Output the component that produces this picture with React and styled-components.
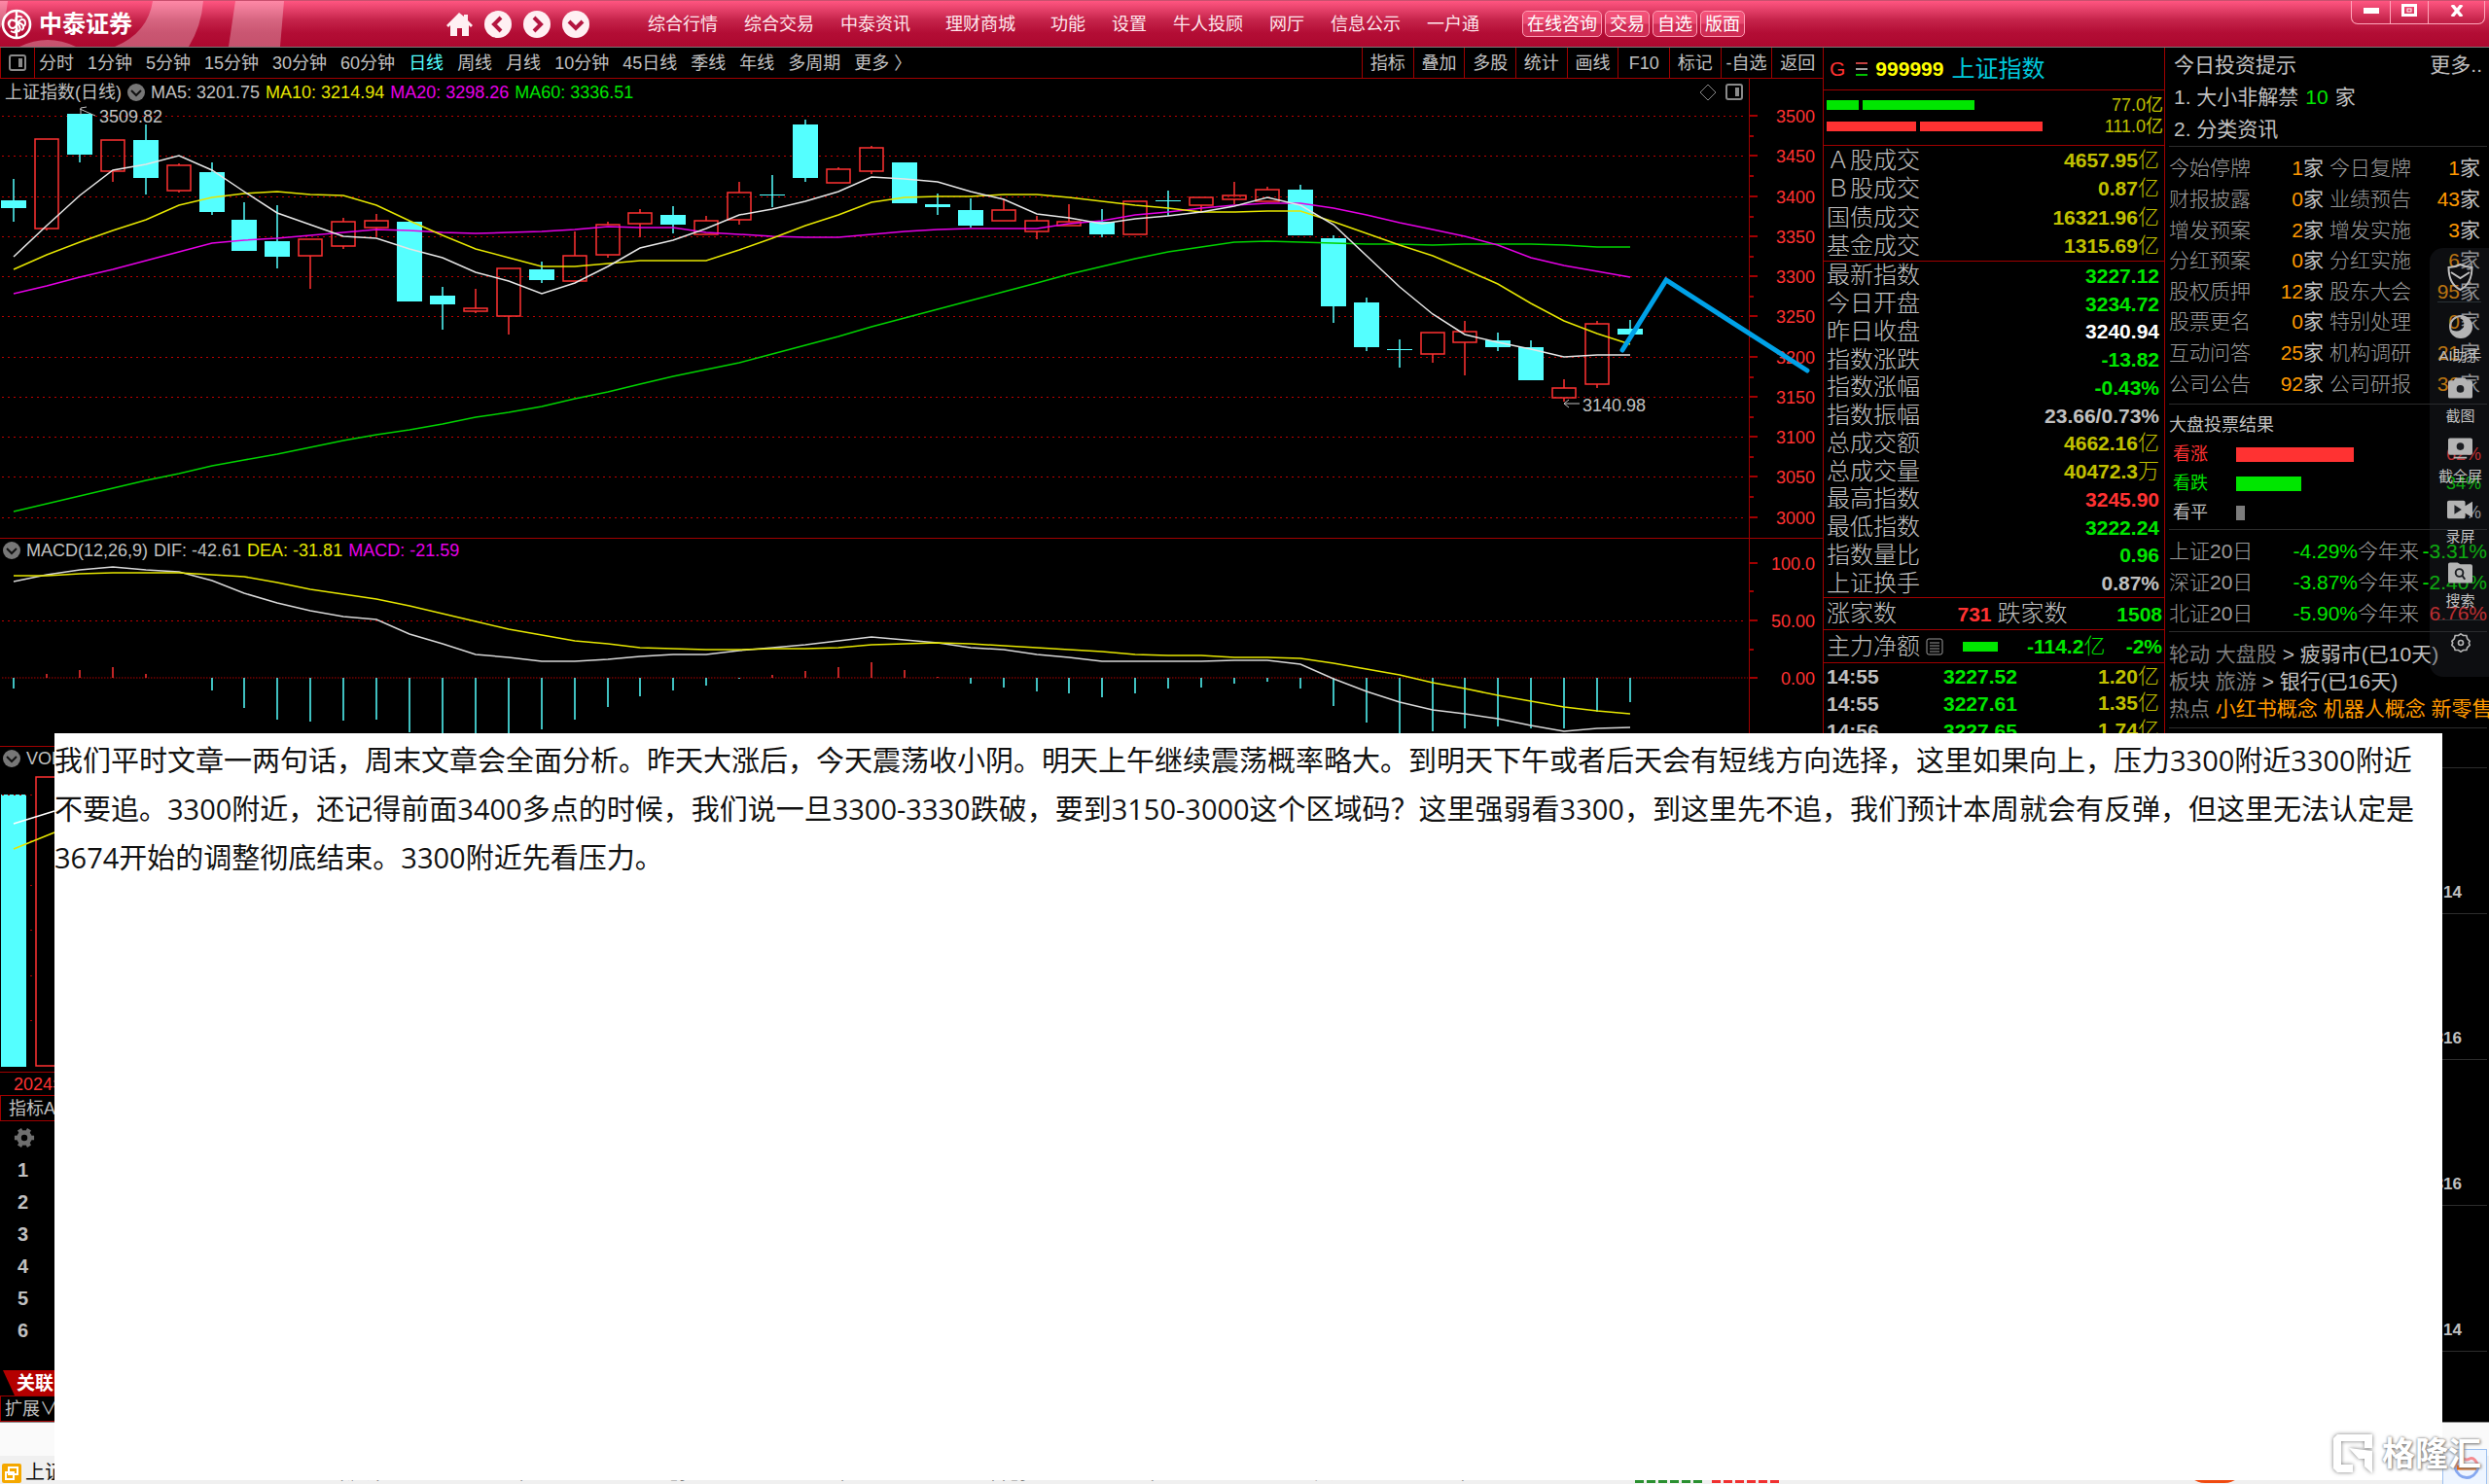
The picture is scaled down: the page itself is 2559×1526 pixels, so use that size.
import React from 'react';
import styled, { createGlobalStyle } from 'styled-components';

const GlobalStyle = createGlobalStyle`
  * {
    box-sizing: border-box;
  }

  body {
    margin: 0;
    background: #000;
    color: #c0c0c0;
    font: 18px/1 "Liberation Sans", "Noto Sans CJK SC", sans-serif;
  }

  button {
    margin: 0;
    padding: 0;
    border: 0;
    background: none;
    color: inherit;
    font: inherit;
    cursor: pointer;
  }

  svg {
    display: block;
  }
`;

/* ---------- data ---------- */

const STEP = 33.92;
const cx = (i) => Math.round(14 + i * STEP);

// [up, body top, body bottom, high, low]
const CANDLES = [
  [0, 206, 214, 184, 228], [1, 143, 235, 143, 237], [0, 117, 159, 117, 167], [1, 144, 176, 144, 187],
  [0, 144, 183, 128, 200], [1, 170, 196, 168, 198], [0, 177, 218, 167, 221], [0, 226, 258, 208, 258],
  [0, 248, 264, 211, 276], [1, 246, 263, 246, 297], [1, 228, 253, 224, 256], [1, 227, 234, 220, 243],
  [0, 228, 310, 227, 310], [0, 304, 313, 295, 339], [1, 317, 320, 297, 322], [1, 276, 325, 276, 344],
  [0, 277, 288, 269, 291], [1, 263, 289, 238, 289], [1, 231, 262, 228, 265], [1, 219, 230, 215, 244],
  [0, 221, 231, 212, 240], [1, 227, 241, 222, 241], [1, 198, 226, 187, 231], [0, 200, 201, 180, 213],
  [0, 128, 183, 123, 187], [1, 174, 188, 172, 188], [1, 152, 176, 150, 179], [0, 167, 209, 167, 209],
  [0, 210, 213, 199, 221], [0, 216, 232, 204, 234], [1, 216, 227, 205, 227], [1, 227, 238, 222, 246],
  [1, 228, 232, 210, 232], [0, 228, 241, 215, 244], [1, 207, 241, 207, 241], [0, 206, 207, 196, 222],
  [1, 203, 211, 203, 218], [1, 201, 205, 187, 210], [1, 195, 207, 192, 207], [0, 195, 242, 190, 242],
  [0, 245, 315, 242, 332], [0, 311, 357, 306, 361], [0, 359, 360, 349, 378], [1, 342, 364, 342, 373],
  [1, 341, 352, 330, 386], [0, 350, 357, 342, 361], [0, 357, 391, 350, 391], [1, 399, 409, 390, 413],
  [1, 333, 395, 330, 399], [0, 338, 344, 329, 344],
];

const MA5 = [264, 232, 201, 175, 169, 160, 175, 197, 219, 231, 243, 245, 256, 265, 280, 289, 302, 291, 274, 255, 247, 235, 221, 215, 207, 197, 182, 184, 187, 197, 205, 220, 224, 230, 225, 222, 218, 212, 203, 211, 231, 263, 295, 323, 344, 352, 359, 367, 365, 365];
const MA10 = [277, 262, 249, 237, 226, 211, 203, 199, 197, 200, 201, 211, 227, 242, 256, 265, 274, 274, 271, 268, 268, 268, 257, 245, 232, 221, 208, 203, 202, 202, 200, 200, 203, 207, 211, 214, 218, 218, 217, 217, 228, 240, 252, 263, 277, 292, 312, 330, 343, 354];
const MA20 = [302, 294, 285, 277, 268, 259, 250, 247, 245, 242, 239, 236, 237, 239, 240, 239, 238, 236, 233, 234, 234, 239, 241, 243, 244, 244, 241, 238, 236, 235, 235, 235, 230, 227, 221, 218, 214, 211, 209, 209, 214, 221, 229, 236, 243, 252, 265, 273, 279, 285];
const MA60 = [526, 518, 510, 502, 494, 487, 479, 473, 467, 460, 453, 447, 442, 436, 429, 424, 418, 410, 403, 395, 387, 380, 373, 364, 355, 346, 336, 327, 318, 309, 300, 291, 282, 274, 266, 259, 254, 249, 248, 249, 250, 251, 251, 252, 251, 251, 251, 252, 254, 254];

const DIF = [598, 591, 586, 583, 586, 588, 597, 610, 620, 628, 634, 637, 652, 662, 673, 676, 680, 680, 678, 675, 673, 673, 669, 666, 663, 659, 655, 658, 661, 666, 668, 673, 676, 680, 680, 680, 680, 679, 679, 683, 698, 711, 722, 730, 734, 739, 746, 752, 749, 748];
const DEA = [592, 592, 590, 589, 589, 589, 591, 593, 599, 606, 611, 616, 623, 631, 639, 647, 653, 659, 662, 666, 667, 668, 668, 667, 667, 666, 663, 662, 661, 662, 664, 666, 668, 670, 673, 674, 674, 676, 676, 677, 682, 688, 694, 702, 708, 715, 721, 727, 731, 734];
const HIST = [708, 693, 689, 686, 693, 697, 710, 728, 740, 742, 741, 740, 753, 756, 760, 758, 750, 740, 727, 716, 710, 705, 698, 694, 690, 686, 681, 689, 696, 703, 707, 711, 713, 717, 713, 708, 707, 703, 701, 708, 726, 743, 755, 752, 749, 747, 749, 749, 732, 722];

const PRICES = ['3500', '3450', '3400', '3350', '3300', '3250', '3200', '3150', '3100', '3050', '3000'];
const priceY = (i) => Math.round(119 + i * 41.25);

const MENU = [
  ['综合行情', '综合交易', '中泰资讯'],
  ['理财商城'],
  ['功能', '设置', '牛人投顾', '网厅', '信息公示', '一户通'],
];
const PERIODS = ['分时', '1分钟', '5分钟', '15分钟', '30分钟', '60分钟', '日线', '周线', '月线', '10分钟', '45日线', '季线', '年线', '多周期'];
const TOOLS = ['指标', '叠加', '多股', '统计', '画线', 'F10', '标记', '-自选', '返回'];

const TURNOVER = [
  ['Ａ股成交', '4657.95', 'gold', '亿'],
  ['Ｂ股成交', '0.87', 'gold', '亿'],
  ['国债成交', '16321.96', 'gold', '亿'],
  ['基金成交', '1315.69', 'gold', '亿'],
];
const QUOTES = [
  ['最新指数', '3227.12', 'green'],
  ['今日开盘', '3234.72', 'green'],
  ['昨日收盘', '3240.94', 'white'],
  ['指数涨跌', '-13.82', 'green'],
  ['指数涨幅', '-0.43%', 'green'],
  ['指数振幅', '23.66/0.73%', 'grey'],
  ['总成交额', '4662.16', 'gold', '亿'],
  ['总成交量', '40472.3', 'gold', '万'],
  ['最高指数', '3245.90', 'red'],
  ['最低指数', '3222.24', 'green'],
  ['指数量比', '0.96', 'green'],
  ['上证换手', '0.87%', 'grey'],
];
const TICKS = [
  ['14:55', '3227.52', '1.20'],
  ['14:55', '3227.61', '1.35'],
  ['14:56', '3227.65', '1.74'],
];
const NOTICES = [
  ['今始停牌', 1, '今日复牌', 1],
  ['财报披露', 0, '业绩预告', 43],
  ['增发预案', 2, '增发实施', 3],
  ['分红预案', 0, '分红实施', 6],
  ['股权质押', 12, '股东大会', 95],
  ['股票更名', 0, '特别处理', 0],
  ['互动问答', 25, '机构调研', 21],
  ['公司公告', 92, '公司研报', 36],
];
const VOTES = [
  ['看涨', 62, 121, 'red', 'red'],
  ['看跌', 34, 67, 'green', 'green'],
  ['看平', 4, 9, 'dim', 'grey'],
];
const RETURNS = [
  ['上证20日', '-4.29%', '-3.31%', 'green'],
  ['深证20日', '-3.87%', '-2.40%', 'green'],
  ['北证20日', '-5.90%', '6.76%', 'red'],
];

const COLORS = {
  red: '#ff3232',
  green: '#00e600',
  gold: '#c0c000',
  grey: '#c0c0c0',
  dim: '#7c7c7c',
  white: '#ffffff',
  orange: '#ff9900',
  cyan: '#54ffff',
  magenta: '#e600e6',
  yellow: '#e6e600',
};
const RULE = '#a00000';

/* ---------- frame ---------- */

const Page = styled.div`
  position: relative;
  display: flex;
  flex-direction: column;
  min-height: 100vh;
  overflow: hidden;
`;

const TitleBar = styled.header`
  position: relative;
  display: flex;
  align-items: center;
  height: 49px;
  border-top: 1px solid #c8506e;
  border-bottom: 1px solid #777;
  background: linear-gradient(180deg, #ff5580 0%, #e33f68 20%, #c5234a 42%, #b30d35 70%, #ad082f 100%);
  color: #ffe6ec;
`;

const Arcs = styled.svg`
  position: absolute;
  left: 0;
  top: 0;
`;

const Brand = styled.div`
  position: relative;
  display: flex;
  align-items: center;
  gap: 7px;
  width: 458px;
  padding-left: 1px;
  color: #fff;
  font-size: 24px;
  font-weight: 700;
`;

const NavIcons = styled.div`
  display: flex;
  align-items: center;
  gap: 12px;
  width: 208px;
`;

const Menu = styled.nav`
  display: flex;
  gap: 36px;
`;

const MenuGroup = styled.div`
  display: flex;
  gap: 27px;
`;

const MenuLink = styled.a`
  color: inherit;
  text-decoration: none;
  white-space: nowrap;
`;

const QuickButtons = styled.div`
  display: flex;
  gap: 3px;
  margin-left: 44px;
`;

const QuickButton = styled.button`
  height: 27px;
  padding: 0 4px;
  border: 1px solid #ff9db4;
  border-radius: 5px;
  background: linear-gradient(180deg, #f5527a 0%, #e84a70 48%, #d02c54 52%, #cf2c54 100%);
  color: #fff;
`;

const WindowButtons = styled.div`
  display: flex;
  align-self: flex-start;
  height: 24px;
  margin-left: auto;
  margin-right: 4px;
  border: 1px solid #ffa6ba;
  border-top: 0;
  border-radius: 0 0 7px 7px;
`;

const WindowButton = styled.button`
  display: flex;
  align-items: center;
  justify-content: center;
  width: ${(p) => (p.$wide ? '58px' : '39px')};
  padding-bottom: 4px;

  & + & {
    border-left: 1px solid #ffa6ba;
  }
`;

const Workspace = styled.main`
  display: flex;
  flex: 1;
`;

const ChartColumn = styled.section`
  display: flex;
  flex: 1;
  flex-direction: column;
  min-width: 0;
`;

/* ---------- toolbar ---------- */

const Toolbar = styled.div`
  display: flex;
  height: 32px;
  border-bottom: 1px solid ${RULE};
`;

const SideToggle = styled.button`
  display: flex;
  align-items: center;
  justify-content: center;
  width: 36px;
  border-left: 1px solid ${RULE};
  border-right: 1px solid ${RULE};
`;

const Periods = styled.div`
  display: flex;
  align-items: center;
  gap: 14px;
  padding-left: 4px;
`;

const Period = styled.button`
  color: ${(p) => (p.$active ? COLORS.cyan : COLORS.grey)};
  white-space: nowrap;
`;

const Tools = styled.div`
  display: grid;
  grid-template-columns: repeat(9, 1fr);
  width: 474px;
  margin-left: auto;
`;

const Tool = styled.button`
  border-left: 1px solid ${RULE};
  white-space: nowrap;
`;

/* ---------- chart panes ---------- */

const Pane = styled.div`
  border-top: ${(p) => (p.$ruled ? `1px solid ${RULE}` : '0')};
`;

const LegendRow = styled.div`
  display: flex;
  height: ${(p) => p.$height};
`;

const Legend = styled.div`
  display: flex;
  flex: 1;
  align-items: center;
  gap: 6px;
  padding: 0 6px 0 ${(p) => (p.$indent ? '3px' : '5px')};
  border-right: 1px solid ${RULE};
`;

const LegendItem = styled.span`
  color: ${(p) => COLORS[p.$color]};
  white-space: nowrap;
`;

const LegendTools = styled.span`
  display: flex;
  align-items: center;
  gap: 9px;
  margin-left: auto;
`;

const AxisCap = styled.div`
  width: 75px;
`;

const Plot = styled.svg`
  width: 100%;
  height: auto;
  overflow: visible;
`;

const DateAxis = styled.div`
  height: 24px;
  padding: 0 14px;
  border-top: 1px solid ${RULE};
  color: ${COLORS.red};
  line-height: 24px;
`;

const StripTab = styled.button`
  height: 27px;
  padding-left: ${(p) => (p.$tight ? '4px' : '8px')};
  border: 1px solid ${RULE};
  text-align: left;
`;

const WatchList = styled.ol`
  margin: 0;
  padding: 0;
  list-style: none;
  font-size: 20px;
  font-weight: 700;
`;

const WatchItem = styled.li`
  display: flex;
  align-items: center;
  height: 33px;
  padding-left: ${(p) => (p.$icon ? '14px' : '18px')};
`;

const RelatedTab = styled.button`
  height: 26px;
  width: 120px;
  margin-top: auto;
  padding-left: 17px;
  background: #b40000;
  clip-path: polygon(3px 0, 100% 0, 100% 100%, 15px 100%);
  color: #fff;
  font-size: 19px;
  font-weight: 700;
  text-align: left;
`;

/* ---------- index panel ---------- */

const IndexPanel = styled.aside`
  width: 352px;
  border-left: 1px solid ${RULE};
  border-right: 1px solid ${RULE};
`;

const IndexTitle = styled.h2`
  display: flex;
  align-items: center;
  gap: 8px;
  height: 44px;
  margin: 0;
  padding: 0 6px;
  border-bottom: 1px solid ${RULE};
  color: #ffff00;
  font-size: 21px;
`;

const IndexFlag = styled.span`
  margin-right: 3px;
  color: ${COLORS.red};
  font-weight: 400;
`;

const IndexName = styled.span`
  color: #00c8dc;
  font-size: 24px;
  font-weight: 400;
`;

const FlowBars = styled.div`
  padding: 4px 1px 8px 3px;
  border-bottom: 1px solid ${RULE};
  color: ${COLORS.gold};
`;

const FlowBar = styled.div`
  display: flex;
  align-items: center;
  gap: 4px;
  height: 22px;
`;

const Bar = styled.span`
  height: ${(p) => (p.$tall ? '15px' : '10px')};
  background: ${(p) => COLORS[p.$color]};
`;

const FlowValue = styled.span`
  margin-left: auto;
`;

const QuoteTable = styled.table`
  width: 100%;
  height: ${(p) => p.$height};
  padding: 0 5px 0 3px;
  border-bottom: 1px solid ${RULE};
  border-spacing: 0;
`;

const QuoteName = styled.th`
  padding: 0;
  font-size: 24px;
  font-weight: 300;
  text-align: left;
  white-space: nowrap;
`;

const QuoteValue = styled.td`
  width: ${(p) => p.$width || 'auto'};
  padding: 0;
  color: ${(p) => COLORS[p.$color]};
  font-size: 21px;
  font-weight: 700;
  text-align: ${(p) => (p.$left ? 'left' : 'right')};
`;

const Unit = styled.span`
  font-size: 22px;
  font-weight: 300;
`;

const SummaryRow = styled.div`
  display: flex;
  align-items: center;
  gap: 6px;
  height: ${(p) => p.$height};
  padding: 0 2px 0 3px;
  border-bottom: 1px solid ${RULE};
  font-size: 24px;
  font-weight: 300;
`;

const SummaryValue = styled.span`
  flex: ${(p) => (p.$fit ? 'none' : '1')};
  color: ${(p) => COLORS[p.$color]};
  font-size: 21px;
  font-weight: 700;
  text-align: right;
`;

const FundBar = styled.span`
  width: 36px;
  height: 10px;
  margin: 0 24px 0 14px;
  background: ${COLORS.green};
`;

/* ---------- news panel ---------- */

const NewsPanel = styled.aside`
  width: 333px;
  overflow: hidden;
  font-size: 21px;
`;

const NewsSection = styled.section`
  margin: 0 2px 0 4px;
  padding: ${(p) => p.$pad};
  border-bottom: 1px solid #2c2c2c;
`;

const NewsLine = styled.div`
  display: flex;
  align-items: center;
  gap: 7px;
  height: ${(p) => p.$height};
  padding: 0 5px;
  white-space: nowrap;
`;

const MoreLink = styled.a`
  margin-left: auto;
  color: inherit;
  text-decoration: none;
`;

const Tint = styled.span`
  color: ${(p) => COLORS[p.$color]};
`;

const NoticeTable = styled.table`
  width: 100%;
  height: ${(p) => p.$height};
  padding-right: ${(p) => (p.$flush ? '0' : '7px')};
  border-spacing: 0;
  table-layout: fixed;
`;

const NoticeName = styled.th`
  width: ${(p) => p.$width};
  padding: 0;
  color: #9a9a9a;
  font-weight: 300;
  text-align: left;
  white-space: nowrap;
`;

const NoticeValue = styled.td`
  width: ${(p) => p.$width || 'auto'};
  padding: 0 ${(p) => (p.$gap ? '6px' : '0')} 0 0;
  color: ${(p) => COLORS[p.$color]};
  text-align: right;
  white-space: nowrap;
`;

const VoteTitle = styled.h3`
  height: 30px;
  margin: 0;
  font-size: 18px;
  font-weight: 400;
  line-height: 30px;
`;

const VoteRow = styled.div`
  display: flex;
  align-items: center;
  height: 30px;
  padding: 0 6px 0 4px;
  color: ${(p) => COLORS[p.$color]};
  font-size: 18px;
`;

const VoteName = styled.span`
  width: 65px;
`;

const VoteShare = styled.span`
  margin-left: auto;
`;

const Rotation = styled.p`
  margin: 0;
  line-height: 28px;
  white-space: nowrap;
`;

const Story = styled.div`
  height: ${(p) => (p.$short ? '41px' : '150px')};
  margin: 0 2px 0 4px;
  padding: ${(p) => (p.$short ? '0' : '119px 26px 0 0')};
  border-bottom: 1px solid #2c2c2c;
  font-size: 17px;
  font-weight: 700;
  text-align: right;
`;

/* ---------- bottom ---------- */

const Footer = styled.footer`
  height: 64px;
  border-top: 1px solid #888;
  background: #fafafa;
`;

const StatusBar = styled.div`
  display: flex;
  align-items: flex-end;
  height: 29px;
  margin-top: 34px;
  padding: 0 2px 1px;
  background: #f0f0f0;
  color: #111;
  font-size: 20px;
  line-height: 21px;
`;

const StatusItem = styled.span`
  width: 330px;
  padding-left: 4px;
  white-space: nowrap;
`;

const Meter = styled.span`
  width: 70px;
  height: 20px;
  margin-left: 9px;
  background: repeating-linear-gradient(90deg, ${(p) => p.$color} 0 9px, transparent 9px 12px);
`;

const StatusBall = styled.span`
  width: 60px;
  height: 20px;
  margin-left: auto;
  margin-right: 250px;
  border-radius: 0 0 30px 30px;
  background: #f04a10;
`;

/* ---------- layers over the workspace ---------- */

const Note = styled.article`
  position: absolute;
  left: 56px;
  right: 48px;
  top: 754px;
  bottom: 4px;
  padding: 3px 0;
  background: #fff;
  color: #111;
  font: 29px/50px "Open Sans", "Noto Sans CJK SC", sans-serif;
  white-space: nowrap;
`;

const CaptureDock = styled.div`
  position: absolute;
  right: 0;
  top: 255px;
  display: flex;
  flex-direction: column;
  align-items: center;
  width: 61px;
  height: 441px;
  padding-top: 16px;
  border-radius: 14px 0 0 14px;
  background: rgba(40, 44, 54, 0.32);
  color: #c0c0c0;
  font-size: 15px;
`;

const DockButton = styled.button`
  display: flex;
  flex-direction: column;
  align-items: center;
  gap: 10px;
  height: ${(p) => p.$height};
  padding-left: 2px;
  white-space: nowrap;
`;

const DockDivider = styled.hr`
  width: 45px;
  height: 1px;
  margin: 0 0 13px;
  border: 0;
  background: #2a3236;
`;

const Watermark = styled.div`
  position: absolute;
  right: 8px;
  bottom: 10px;
  display: flex;
  align-items: center;
  gap: 9px;
  color: #fff;
  font-size: 34px;
  font-weight: 700;
  text-shadow: 0 0 3px #777, 1px 1px 3px #888;

  svg {
    filter: drop-shadow(0 0 2px #777);
  }
`;

const Assistant = styled.button`
  position: absolute;
  right: 2px;
  bottom: 0;
  width: 46px;
  height: 36px;
  padding-left: 9px;
  border: 1px solid #9cc0f0;
  border-bottom: 0;
  background: #eef5ff;
`;

/* ---------- drawings ---------- */

function Logo() {
  return (
    <svg width="32" height="32" viewBox="0 0 32 32" fill="none" stroke="#fff">
      <circle cx="16" cy="16" r="14" strokeWidth="2.6" />
      <path d="M16 2v28" strokeWidth="2.4" />
      <path d="M22 9c-5-3-8 0-6 4l3 5c2 4-1 7-5 4M10 23c5 3 8 0 6-4M9 18c-3-3 0-8 4-6l7 3c4 2 4 6 1 7M10 12c-3 3-2 8 2 8 5 0 5-9 10-9 3 0 4 4 2 7" strokeWidth="2" />
    </svg>
  );
}

function HomeIcon() {
  return (
    <svg width="28" height="26" viewBox="2 0 28 26" fill="#fff0f3">
      <path d="M16 1 3 14l2 2 2-2v11h7v-8h5v8h7V14l2 2 2-2-5-5V3h-4v2z" />
    </svg>
  );
}

function RoundIcon({ d }) {
  return (
    <svg width="28" height="28" viewBox="0 0 28 28" fill="none">
      <circle cx="14" cy="14" r="14" fill="#fff0f3" />
      <path d={d} stroke="#b31540" strokeWidth="4" />
    </svg>
  );
}

function SplitIcon() {
  return (
    <svg width="18" height="17" viewBox="0 0 18 17" fill="none">
      <rect x="1" y="1" width="16" height="15" rx="2" stroke="#8a8a8a" strokeWidth="2" />
      <rect x="10" y="4" width="4" height="9" fill="#8a8a8a" />
    </svg>
  );
}

function FoldIcon() {
  return (
    <svg width="18" height="18" viewBox="0 0 18 18">
      <circle cx="9" cy="9" r="9" fill="#777" />
      <path d="m4 7 5 5 5-5" fill="none" stroke="#111" strokeWidth="2" />
    </svg>
  );
}

function GearIcon() {
  const teeth = [30, 90, 150, 210, 270, 330];
  return (
    <svg width="22" height="22" viewBox="0 0 24 24" fill="none" stroke="#6e6e6e" strokeWidth="5">
      <circle cx="12" cy="12" r="6" />
      {teeth.map((a) => (
        <path key={a} d="M12 1v4" transform={`rotate(${a} 12 12)`} />
      ))}
    </svg>
  );
}

function Line({ data, color }) {
  const points = data.map((y, i) => `${cx(i)},${y}`).join(' ');
  return <polyline points={points} fill="none" stroke={color} strokeWidth="1.5" />;
}

function Axis({ top, bottom, ticks, halves = [] }) {
  return (
    <g stroke={RULE}>
      <path d={`M1798.5 ${top}V${bottom}`} />
      {ticks.map(([y]) => <path key={y} d={`M1799 ${y}h8`} strokeWidth="2" />)}
      {halves.map((y) => <path key={y} d={`M1799 ${y}h4`} strokeWidth="2" />)}
      <g fill={COLORS.red} stroke="none" fontSize="18" textAnchor="end">
        {ticks.map(([y, label]) => <text key={y} x="1866" y={y + 7}>{label}</text>)}
      </g>
    </g>
  );
}

function PriceChart() {
  const ticks = PRICES.map((label, i) => [priceY(i), label]);
  return (
    <Plot viewBox="0 108 1874 445">
      <g stroke="#c00000" strokeDasharray="2 4">
        {ticks.map(([y]) => <path key={y} d={`M2 ${y + 0.5}H1794`} />)}
      </g>
      <Axis top={108} bottom={553} ticks={ticks} halves={ticks.slice(0, 10).map(([y]) => y + 21)} />
      {CANDLES.map(([up, top, bottom, high, low], i) => (
        up ? (
          <g key={i} stroke={COLORS.red} fill="none" strokeWidth="1.5">
            <rect x={cx(i) - 12} y={top} width="24" height={bottom - top} />
            <path d={`M${cx(i)} ${high}V${top}M${cx(i)} ${bottom}V${low}`} />
          </g>
        ) : (
          <g key={i} stroke={COLORS.cyan} fill={COLORS.cyan}>
            <rect x={cx(i) - 13} y={top} width="26" height={Math.max(bottom - top, 1)} stroke="none" />
            <path d={`M${cx(i)} ${high}V${low}`} strokeWidth="1.5" />
          </g>
        )
      ))}
      <Line data={MA60} color="#00d200" />
      <Line data={MA20} color={COLORS.magenta} />
      <Line data={MA10} color={COLORS.yellow} />
      <Line data={MA5} color="#e6e6e6" />
      <g stroke="#c0c0c0" fill="none">
        <path d="M98 119 82 112m1 6v-7l6-1" />
        <path d="M1624 415h-16m5-4-5 4 5 4" />
      </g>
      <g fill="#c0c0c0" fontSize="18">
        <text x="102" y="126">3509.82</text>
        <text x="1627" y="423">3140.98</text>
      </g>
      <path d="M1668 360 1713 288 1858 381" fill="none" stroke="#00a2e8" strokeWidth="5" strokeLinecap="round" />
    </Plot>
  );
}

function MacdChart() {
  return (
    <Plot viewBox="0 578 1874 189">
      <path d="M2 638.5H1794" stroke="#c00000" strokeDasharray="2 4" />
      <path d="M2 697H1797" stroke="#b00000" strokeDasharray="1.5 1.5" />
      <Axis top={578} bottom={767} ticks={[[579, '100.0'], [638, '50.00'], [697, '0.00']]} halves={[608, 668]} />
      {HIST.map((y, i) => (
        <path key={i} d={`M${cx(i)} 697V${y}`} stroke={y < 697 ? COLORS.red : COLORS.cyan} strokeWidth="1.5" />
      ))}
      <Line data={DIF} color="#d8d8d8" />
      <Line data={DEA} color={COLORS.yellow} />
    </Plot>
  );
}

function VolumeChart() {
  return (
    <Plot viewBox="0 792 1874 310">
      <path d="M37 1096V799h26v297z" fill="none" stroke={COLORS.red} strokeWidth="1.5" />
      <rect x="1" y="817" width="26" height="280" fill={COLORS.cyan} />
      <path d="M2 817.5h25" stroke="#b00000" strokeDasharray="2 4" />
      {[817, 864, 910, 956, 1003, 1049].map((y) => (
        <rect key={y} x="31" y={y} width="2" height="1" fill="#b00000" />
      ))}
      <path d="M14 847 56 834" stroke="#fff" strokeWidth="1.5" />
      <path d="M14 873 56 856" stroke={COLORS.yellow} strokeWidth="1.5" />
    </Plot>
  );
}

/* ---------- sections ---------- */

function Header() {
  return (
    <TitleBar>
      <Arcs width="300" height="47" viewBox="0 0 300 47" fill="#fff" fillOpacity="0.3">
        <path d="M157 0h52q-2 26-15 47h-76q34-14 39-47z" />
        <path d="M242 0h50l-4 47h-53z" />
        <path d="M20 47q29-14 58 0z" />
        <path d="M0 0h8Q6 20 0 28z" />
      </Arcs>
      <Brand><Logo />中泰证券</Brand>
      <NavIcons>
        <button aria-label="首页"><HomeIcon /></button>
        <button aria-label="后退"><RoundIcon d="m17 7-7 7 7 7" /></button>
        <button aria-label="前进"><RoundIcon d="m11 7 7 7-7 7" /></button>
        <button aria-label="展开"><RoundIcon d="m7 11 7 7 7-7" /></button>
      </NavIcons>
      <Menu>
        {MENU.map((group) => (
          <MenuGroup key={group[0]}>
            {group.map((name) => <MenuLink key={name} href="#">{name}</MenuLink>)}
          </MenuGroup>
        ))}
      </Menu>
      <QuickButtons>
        {['在线咨询', '交易', '自选', '版面'].map((name) => <QuickButton key={name}>{name}</QuickButton>)}
      </QuickButtons>
      <WindowButtons>
        <WindowButton aria-label="最小化">
          <svg width="16" height="6"><rect width="16" height="6" fill="#fff" /></svg>
        </WindowButton>
        <WindowButton aria-label="还原">
          <svg width="16" height="13" fill="none" stroke="#fff">
            <rect x="1.5" y="1.5" width="13" height="10" strokeWidth="3" />
            <rect x="6" y="5" width="4" height="3" />
          </svg>
        </WindowButton>
        <WindowButton $wide aria-label="关闭">
          <svg width="14" height="12"><path d="m2 0 10 12M12 0 2 12" stroke="#fff" strokeWidth="3.5" /></svg>
        </WindowButton>
      </WindowButtons>
    </TitleBar>
  );
}

function Charts() {
  return (
    <ChartColumn>
      <Toolbar>
        <SideToggle aria-label="侧栏"><SplitIcon /></SideToggle>
        <Periods>
          {PERIODS.map((name) => <Period key={name} $active={name === '日线'}>{name}</Period>)}
          <Period>更多 〉</Period>
        </Periods>
        <Tools>
          {TOOLS.map((name) => <Tool key={name}>{name}</Tool>)}
        </Tools>
      </Toolbar>
      <Pane>
        <LegendRow $height="27px">
          <Legend>
            <LegendItem $color="grey">上证指数(日线)</LegendItem>
            <FoldIcon />
            <LegendItem $color="grey">MA5: 3201.75</LegendItem>
            <LegendItem $color="yellow">MA10: 3214.94</LegendItem>
            <LegendItem $color="magenta">MA20: 3298.26</LegendItem>
            <LegendItem $color="green">MA60: 3336.51</LegendItem>
            <LegendTools>
              <svg width="18" height="18" fill="none" stroke="#888"><path d="m9 1 8 8-8 8-8-8z" /></svg>
              <SplitIcon />
            </LegendTools>
          </Legend>
          <AxisCap />
        </LegendRow>
        <PriceChart />
      </Pane>
      <Pane $ruled>
        <LegendRow $height="24px">
          <Legend $indent>
            <FoldIcon />
            <LegendItem $color="grey">MACD(12,26,9)</LegendItem>
            <LegendItem $color="grey">DIF: -42.61</LegendItem>
            <LegendItem $color="yellow">DEA: -31.81</LegendItem>
            <LegendItem $color="magenta">MACD: -21.59</LegendItem>
          </Legend>
          <AxisCap />
        </LegendRow>
        <MacdChart />
      </Pane>
      <Pane $ruled>
        <LegendRow $height="24px">
          <Legend $indent>
            <FoldIcon />
            <LegendItem $color="grey">VOL</LegendItem>
          </Legend>
          <AxisCap />
        </LegendRow>
        <VolumeChart />
      </Pane>
      <DateAxis>2024年</DateAxis>
      <StripTab>指标A</StripTab>
      <WatchList>
        <WatchItem $icon><GearIcon /></WatchItem>
        {[1, 2, 3, 4, 5, 6].map((n) => <WatchItem key={n}>{n}</WatchItem>)}
      </WatchList>
      <RelatedTab>关联</RelatedTab>
      <StripTab $tight>扩展∨</StripTab>
    </ChartColumn>
  );
}

function QuoteRows({ rows, height }) {
  return (
    <QuoteTable $height={height}>
      <tbody>
        {rows.map(([name, value, color, unit]) => (
          <tr key={name}>
            <QuoteName scope="row">{name}</QuoteName>
            <QuoteValue $color={color}>{value}{unit && <Unit>{unit}</Unit>}</QuoteValue>
          </tr>
        ))}
      </tbody>
    </QuoteTable>
  );
}

function IndexQuotes() {
  return (
    <IndexPanel>
      <IndexTitle>
        <IndexFlag>G</IndexFlag>
        <svg width="12" height="16" strokeWidth="2">
          <path d="M0 2h12" stroke="#c04040" />
          <path d="M0 8h12" stroke="#a0a0a0" />
          <path d="M0 14h12" stroke="#00c000" />
        </svg>
        999999
        <IndexName>上证指数</IndexName>
      </IndexTitle>
      <FlowBars>
        <FlowBar>
          <Bar $color="green" style={{ width: 33 }} />
          <Bar $color="green" style={{ width: 115 }} />
          <FlowValue>77.0亿</FlowValue>
        </FlowBar>
        <FlowBar>
          <Bar $color="red" style={{ width: 92 }} />
          <Bar $color="red" style={{ width: 126 }} />
          <FlowValue>111.0亿</FlowValue>
        </FlowBar>
      </FlowBars>
      <QuoteRows rows={TURNOVER} height="119px" />
      <QuoteRows rows={QUOTES} height="346px" />
      <SummaryRow $height="33px">
        涨家数<SummaryValue $color="red">731</SummaryValue>
        跌家数<SummaryValue $color="green">1508</SummaryValue>
      </SummaryRow>
      <SummaryRow $height="34px">
        主力净额
        <svg width="18" height="18" fill="none" stroke="#999">
          <rect x="1" y="1" width="16" height="16" rx="2" />
          <path d="M4 5h10M4 8h10M4 11h10M4 14h10" />
        </svg>
        <FundBar />
        <SummaryValue $fit $color="green">-114.2<Unit>亿</Unit></SummaryValue>
        <SummaryValue $color="green">-2%</SummaryValue>
      </SummaryRow>
      <QuoteTable $height="84px">
        <tbody>
          {TICKS.map(([time, price, amount]) => (
            <tr key={price}>
              <QuoteValue $left $width="120px" $color="grey">{time}</QuoteValue>
              <QuoteValue $left $color="green">{price}</QuoteValue>
              <QuoteValue $color="gold">{amount}<Unit>亿</Unit></QuoteValue>
            </tr>
          ))}
        </tbody>
      </QuoteTable>
    </IndexPanel>
  );
}

function News() {
  return (
    <NewsPanel>
      <NewsSection $pad="0 0 1px">
        <NewsLine $height="34px">今日投资提示<MoreLink href="#">更多..</MoreLink></NewsLine>
        <NewsLine $height="33px">1. 大小非解禁 <Tint $color="green">10</Tint> 家</NewsLine>
        <NewsLine $height="33px">2. 分类资讯</NewsLine>
      </NewsSection>
      <NewsSection $pad="6px 0 5px">
        <NoticeTable $height="253px">
          <tbody>
            {NOTICES.map(([a, countA, b, countB]) => (
              <tr key={a}>
                <NoticeName scope="row" $width="86px">{a}</NoticeName>
                <NoticeValue $gap $width="79px" $color="orange">{countA}<Tint $color="grey">家</Tint></NoticeValue>
                <NoticeName scope="row" $width="86px">{b}</NoticeName>
                <NoticeValue $color="orange">{countB}<Tint $color="grey">家</Tint></NoticeValue>
              </tr>
            ))}
          </tbody>
        </NoticeTable>
      </NewsSection>
      <NewsSection $pad="6px 0 2px">
        <VoteTitle>大盘投票结果</VoteTitle>
        {VOTES.map(([name, share, width, bar, text]) => (
          <VoteRow key={name} $color={text}>
            <VoteName>{name}</VoteName>
            <Bar $tall $color={bar} style={{ width }} />
            <VoteShare>{share}%</VoteShare>
          </VoteRow>
        ))}
      </NewsSection>
      <NewsSection $pad="6px 0 3px">
        <NoticeTable $flush $height="95px">
          <tbody>
            {RETURNS.map(([name, month, year, color]) => (
              <tr key={name}>
                <NoticeName scope="row" $width="110px">{name}</NoticeName>
                <NoticeValue $width="84px" $color="green">{month}</NoticeValue>
                <NoticeName scope="row" $width="64px">今年来</NoticeName>
                <NoticeValue $color={color}>{year}</NoticeValue>
              </tr>
            ))}
          </tbody>
        </NoticeTable>
      </NewsSection>
      <NewsSection $pad="9px 0 5px">
        <Rotation><Tint $color="dim">轮动 大盘股</Tint> &gt; 疲弱市(已10天)</Rotation>
        <Rotation><Tint $color="dim">板块 旅游</Tint> &gt; 银行(已16天)</Rotation>
        <Rotation><Tint $color="dim">热点</Tint> <Tint $color="orange">小红书概念 机器人概念 新零售</Tint></Rotation>
      </NewsSection>
      <Story $short />
      <Story>14</Story>
      <Story>316</Story>
      <Story>316</Story>
      <Story>14</Story>
    </NewsPanel>
  );
}

function Dock() {
  return (
    <CaptureDock>
      <DockButton $height="39px" aria-label="安全">
        <svg width="27" height="28" viewBox="0 0 27 28" fill="none" stroke="currentColor" strokeWidth="2">
          <path d="M13.500 1c4 2 8 3 12 3 0 12-4 19-12 23C5.500 23 1.500 16 1.500 4c4 0 8-1 12-3z" />
          <path d="m4 9 9.500 6L23 9" />
        </svg>
      </DockButton>
      <DockDivider />
      <DockButton $height="64px">
        <svg width="24" height="24" viewBox="0 0 24 24">
          <circle cx="12" cy="12" r="11" fill="none" stroke="#b4b4b4" strokeWidth="2" />
          <path d="M17 2c8 6 8 16 0 20-7 3-15 0-16-8 4 4 12 3 14-2 1-4 0-8-5-9 3-1 5-2 7-1z" fill="#b4b4b4" />
        </svg>
        AI助手
      </DockButton>
      <DockButton $height="62px">
        <svg width="25" height="22" viewBox="0 0 26 22">
          <path d="M8 0h10l2 3h4q2 0 2 2v15q0 2-2 2H2q-2 0-2-2V5q0-2 2-2h4z" fill="#b4b4b4" />
          <circle cx="13" cy="12" r="4" fill="#1c1e22" />
        </svg>
        截图
      </DockButton>
      <DockButton $height="64px">
        <svg width="25" height="22" viewBox="0 0 26 22">
          <path d="M2 0h22q2 0 2 2v14q0 2-2 2H2q-2 0-2-2V2q0-2 2-2zM6 20h14v2H6z" fill="#b4b4b4" />
          <circle cx="13" cy="9" r="4" fill="#1c1e22" />
        </svg>
        截全屏
      </DockButton>
      <DockButton $height="64px">
        <svg width="26" height="20" viewBox="0 0 28 20">
          <path d="M2 0h16q2 0 2 2v4l8-5v18l-8-5v4q0 2-2 2H2q-2 0-2-2V2q0-2 2-2z" fill="#b4b4b4" />
          <path d="m8 5 8 5-8 5z" fill="#1c1e22" />
        </svg>
        录屏
      </DockButton>
      <DockButton $height="59px">
        <svg width="25" height="22" viewBox="0 0 26 22">
          <path d="M2 0h8l3 2h11q2 0 2 2v16q0 2-2 2H2q-2 0-2-2V2q0-2 2-2z" fill="#b4b4b4" />
          <circle cx="12" cy="11" r="4" fill="none" stroke="#1c1e22" strokeWidth="2" />
          <path d="m15 14 3 4" stroke="#1c1e22" strokeWidth="2" />
        </svg>
        搜索
      </DockButton>
      <DockDivider />
      <DockButton $height="24px" aria-label="设置">
        <svg width="20" height="20" viewBox="0 0 24 24" fill="none" stroke="#b4b4b4" strokeWidth="2">
          <path d="m12 1 3 2h4l1 4 3 3-1 2 1 3-3 3-1 3h-4l-3 2-3-2H5l-1-3-3-3 1-3-1-2 3-3 1-4h4z" />
          <circle cx="12" cy="12" r="3" />
        </svg>
      </DockButton>
    </CaptureDock>
  );
}

export default function App() {
  return (
    <Page>
      <GlobalStyle />
      <Header />
      <Workspace>
        <Charts />
        <IndexQuotes />
        <News />
      </Workspace>
      <Footer>
        <StatusBar>
          <svg width="20" height="20" viewBox="0 0 20 20">
            <rect width="20" height="20" rx="2" fill="#f5a800" />
            <path d="M7 4h9v7H7zM4 9h8v7H4z" fill="#f5a800" stroke="#fff" strokeWidth="2" />
          </svg>
          <StatusItem>上证3227.12 -13.82 -0.43% 4662.16亿</StatusItem>
          <StatusItem>沪深 -0.74% 2641.2亿</StatusItem>
          <StatusItem>创业 -1.09% 1834.5亿</StatusItem>
          <StatusItem>科创 -0.62% 712.4亿</StatusItem>
          <StatusItem>北证 -0.88% 96.1亿</StatusItem>
          <Meter $color="#2a9030" />
          <Meter $color="#f03030" />
          <StatusBall />
        </StatusBar>
      </Footer>
      <Note>
        我们平时文章一两句话，周末文章会全面分析。昨天大涨后，今天震荡收小阴。明天上午继续震荡概率略大。到明天下午或者后天会有短线方向选择，这里如果向上，压力3300附近3300附近
        <br />
        不要追。3300附近，还记得前面3400多点的时候，我们说一旦3300-3330跌破，要到3150-3000这个区域码？这里强弱看3300，到这里先不追，我们预计本周就会有反弹，但这里无法认定是
        <br />
        3674开始的调整彻底结束。3300附近先看压力。
      </Note>
      <Dock />
      <Assistant aria-label="助手">
        <svg width="30" height="30" viewBox="0 0 30 30" fill="none" strokeWidth="3">
          <path d="M3 15C5 8 9 4 12 6q3 2 6 0c4-2 8 3 9 9" stroke="#f58a90" />
          <path d="M3 15c4 14 20 14 24 0" stroke="#86a8f0" />
          <path d="M5 15h20" stroke="#e86a10" strokeWidth="5" />
        </svg>
      </Assistant>
      <Watermark>
        <svg width="42" height="42" viewBox="0 0 42 42" fill="#fff">
          <path d="M5 1h36v14h-8V8H9v24h12v8H5l-4-4V5zM17 15l24 3v23l-8-7v-8h-6z" />
        </svg>
        格隆汇
      </Watermark>
    </Page>
  );
}
